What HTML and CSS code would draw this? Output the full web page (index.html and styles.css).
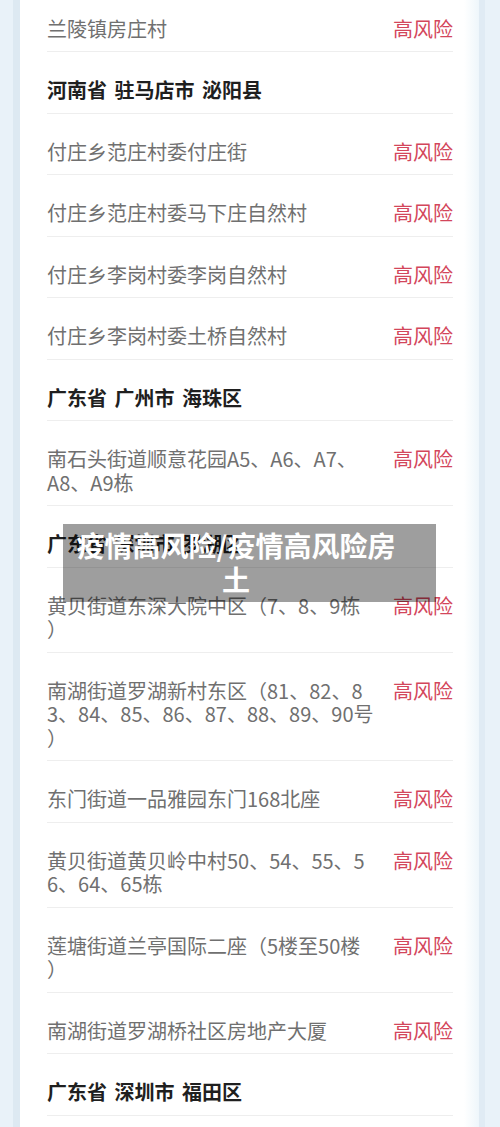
FILE: index.html
```html
<!DOCTYPE html>
<html>
<head>
    <title>疫情高风险地区</title>
    <meta name="viewport" content="width=device-width, initial-scale=1.0">
    <link rel="stylesheet" href="styles.css">
</head>
<body>
    <div class="page">
        <ul class="area-list">
            <li class="row first">
                <span class="place">兰陵镇房庄村</span>
                <span class="level">高风险</span>
            </li>
            <li class="row region">河南省 驻马店市 泌阳县</li>
            <li class="row">
                <span class="place">付庄乡范庄村委付庄街</span>
                <span class="level">高风险</span>
            </li>
            <li class="row">
                <span class="place">付庄乡范庄村委马下庄自然村</span>
                <span class="level">高风险</span>
            </li>
            <li class="row">
                <span class="place">付庄乡李岗村委李岗自然村</span>
                <span class="level">高风险</span>
            </li>
            <li class="row">
                <span class="place">付庄乡李岗村委土桥自然村</span>
                <span class="level">高风险</span>
            </li>
            <li class="row region">广东省 广州市 海珠区</li>
            <li class="row">
                <span class="place">南石头街道顺意花园A5、A6、A7、<br>A8、A9栋</span>
                <span class="level">高风险</span>
            </li>
            <li class="row region">广东省 深圳市 罗湖区</li>
            <li class="row">
                <span class="place">黄贝街道东深大院中区（7、8、9栋<br>）</span>
                <span class="level">高风险</span>
            </li>
            <li class="row">
                <span class="place">南湖街道罗湖新村东区（81、82、8<br>3、84、85、86、87、88、89、90号<br>）</span>
                <span class="level">高风险</span>
            </li>
            <li class="row">
                <span class="place">东门街道一品雅园东门168北座</span>
                <span class="level">高风险</span>
            </li>
            <li class="row">
                <span class="place">黄贝街道黄贝岭中村50、54、55、5<br>6、64、65栋</span>
                <span class="level">高风险</span>
            </li>
            <li class="row">
                <span class="place">莲塘街道兰亭国际二座（5楼至50楼<br>）</span>
                <span class="level">高风险</span>
            </li>
            <li class="row">
                <span class="place">南湖街道罗湖桥社区房地产大厦</span>
                <span class="level">高风险</span>
            </li>
            <li class="row region">广东省 深圳市 福田区</li>
        </ul>
    </div>

    <div class="caption">疫情高风险/疫情高风险房土</div>
</body>
</html>
```

FILE: styles.css
```css
body {
    margin: 0;
    height: 1127px;
    overflow: hidden;
    background-color: #e9f2f9;
    font-family: "Noto Sans CJK SC", "Noto Sans", sans-serif;
    position: relative;
}

.page {
    width: 459px;
    margin-left: 13px;
    border-left: 7px solid #dde9f2;
    border-right: 6px solid #e0ebf4;
    background: linear-gradient(to right, #fff 0, #fff 444px, #eef6fb 459px);
    min-height: 1127px;
}

.area-list {
    list-style: none;
    margin: 0;
    padding: 0 26px 0 27px;
}

.row {
    display: flex;
    justify-content: space-between;
    align-items: flex-start;
    padding: 26px 0 11px;
    border-bottom: 1px solid #eeeeee;
    font-size: 20px;
    line-height: 23.5px;
}

.row.first {
    padding-top: 16.5px;
}

.place {
    color: #707070;
}

.level {
    color: #d3465b;
    flex-shrink: 0;
}

.region {
    color: #1f1f1f;
    font-weight: bold;
    word-spacing: 3px;
}

.caption {
    position: absolute;
    left: 63px;
    top: 524px;
    width: 334px;
    height: 68px;
    padding: 4px 33px 6px 6px;
    background-color: rgba(0, 0, 0, 0.38);
    color: #fff;
    font-size: 28px;
    font-weight: bold;
    line-height: 34px;
    text-align: center;
}
```
